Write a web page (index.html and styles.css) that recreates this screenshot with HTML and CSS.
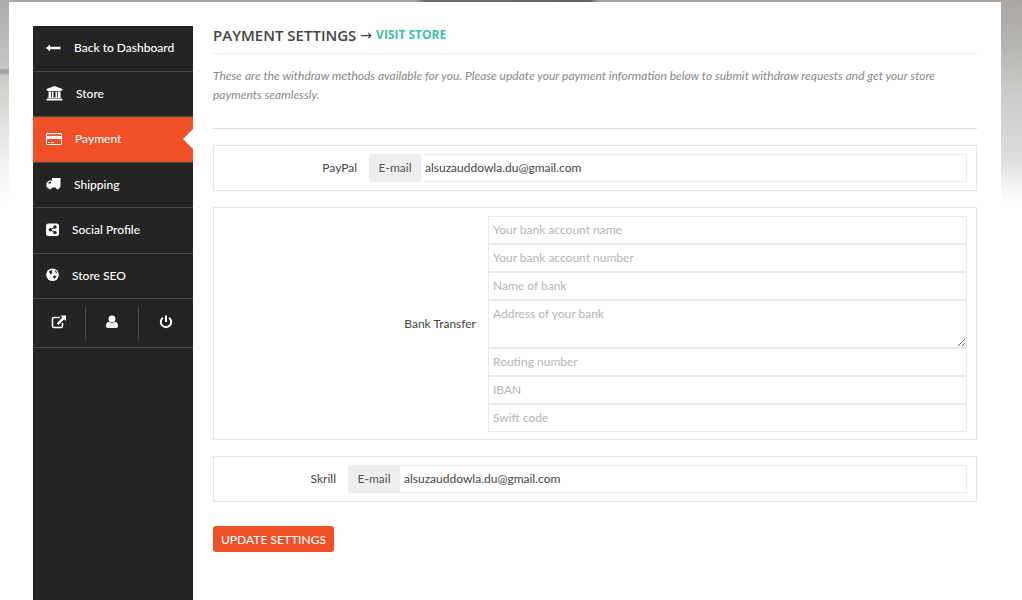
FILE: index.html
```html
<!DOCTYPE html>
<html lang="en">
<head>
    <meta charset="UTF-8">
    <meta name="viewport" content="width=device-width, initial-scale=1.0">
    <title>Payment Settings</title>
    <link rel="stylesheet" href="styles.css">
</head>
<body>
    <div class="container">
        <nav class="sidebar">
            <ul class="menu">
                <li><a href="#">
                    <svg class="icon" width="15" height="14" viewBox="0 0 15 14"><path d="M0 7L4 3.500V5.800H14.500V8.200H4V10.500z"/></svg>
                    Back to Dashboard
                </a></li>
                <li><a href="#">
                    <svg class="icon" width="17" height="15" viewBox="0 0 17 15"><path d="M8.500 0L16.500 3V4.200H15.500V5H1.500V4.200H0.500V3zM2.500 5.500H5V11.500H5.800V5.500H7.500V11.500H9.500V5.500H11.200V11.500H12V5.500H14.500V11.500H15.500V12.500H1.500V11.500H2.500zM0.500 13H16.500V14.500H0.500z"/></svg>
                    Store
                </a></li>
                <li class="active"><a href="#">
                    <svg class="icon" width="16" height="14" viewBox="0 0 16 14"><path fill-rule="evenodd" d="M1.500 1H14.500Q16 1 16 2.500V11.500Q16 13 14.500 13H1.500Q0 13 0 11.500V2.500Q0 1 1.500 1zM1 2.200V4H15V2.200zM1 7V12H15V7zM2 10H4V11H2zM5 10H8V11H5z"/></svg>
                    Payment
                </a></li>
                <li><a href="#">
                    <svg class="icon" width="15" height="14" viewBox="0 0 15 14"><path fill-rule="evenodd" d="M6 1H14.500V10.500H13.400A1.800 1.800 0 0 1 9.800 10.500H5.800A1.800 1.800 0 0 1 2.200 10.500H0.500V6L3 3.500H6zM2 6.500H5V4.500H3.700L2 6.200z"/><circle cx="4" cy="10.800" r="1.500"/><circle cx="11.600" cy="10.800" r="1.500"/></svg>
                    Shipping
                </a></li>
                <li><a href="#">
                    <svg class="icon" width="13" height="14" viewBox="0 0 13 14"><rect y="0.500" width="13" height="12.500" rx="2.500"/><path class="cut-line" d="M9 4L4.500 6.800L9 9.600"/><g class="cut"><circle cx="9" cy="4" r="1.700"/><circle cx="4.300" cy="6.800" r="1.700"/><circle cx="9" cy="9.600" r="1.700"/></g></svg>
                    Social Profile
                </a></li>
                <li><a href="#">
                    <svg class="icon" width="13" height="14" viewBox="0 0 13 14"><circle cx="6.500" cy="6.700" r="6.300"/><path class="cut" d="M3 3.500L5 2L6.500 2.500L5.500 4L6.500 5L5 6.500L3.500 5zM8.500 2L10.500 3.200L11.300 5.500L9.500 4.500zM7 8L9 7.500L10.500 8.500L8.500 11L7.500 10z"/></svg>
                    Store SEO
                </a></li>
            </ul>
            <div class="quick-links">
                <a href="#" aria-label="Visit store">
                    <svg class="icon" width="16" height="14" viewBox="0 0 16 14"><path class="line" d="M9 2.500H3Q1.500 2.500 1.500 4V11Q1.500 12.500 3 12.500H10Q11.500 12.500 11.500 11V8"/><path d="M9.500 0.500H15V6L13.200 4.300L7.500 10L5.800 8.300L11.400 2.500z"/></svg>
                </a>
                <a href="#" aria-label="Edit account">
                    <svg class="icon" width="12" height="14" viewBox="0 0 12 14"><circle cx="6" cy="4" r="3.400"/><path d="M2.700 6.700Q6 9.600 9.300 6.700Q12 7.500 12 11Q12 13 10 13H2Q0 13 0 11Q0 7.500 2.700 6.700z"/></svg>
                </a>
                <a href="#" aria-label="Log out">
                    <svg class="icon" width="14" height="14" viewBox="0 0 14 14"><path class="line thick" d="M4 2.700A5.200 5.200 0 1 0 10 2.700M7 0.500V7"/></svg>
                </a>
            </div>
        </nav>

        <main class="content">
            <header class="page-header">
                <h1>Payment Settings</h1>
                <span class="arrow">→</span>
                <a href="#">Visit Store</a>
            </header>

            <p class="help">These are the withdraw methods available for you. Please update your payment information below to submit withdraw requests and get your store payments seamlessly.</p>

            <form class="payment-form">
                <div class="method paypal">
                    <label class="method-label" for="paypal">PayPal</label>
                    <div class="input-group">
                        <span class="addon">E-mail</span>
                        <input type="email" id="paypal" value="alsuzauddowla.du@gmail.com">
                    </div>
                </div>

                <div class="method bank" role="group" aria-labelledby="bankLabel">
                    <label class="method-label" id="bankLabel" for="bankName">Bank Transfer</label>
                    <div class="bank-fields">
                        <input type="text" id="bankName" placeholder="Your bank account name">
                        <input type="text" aria-label="Account number" placeholder="Your bank account number">
                        <input type="text" aria-label="Bank" placeholder="Name of bank">
                        <textarea aria-label="Bank address" placeholder="Address of your bank"></textarea>
                        <input type="text" aria-label="Routing number" placeholder="Routing number">
                        <input type="text" aria-label="IBAN" placeholder="IBAN">
                        <input type="text" aria-label="Swift code" placeholder="Swift code">
                    </div>
                </div>

                <div class="method skrill">
                    <label class="method-label" for="skrill">Skrill</label>
                    <div class="input-group">
                        <span class="addon">E-mail</span>
                        <input type="email" id="skrill" value="alsuzauddowla.du@gmail.com">
                    </div>
                </div>

                <button type="submit" class="submit-btn">Update Settings</button>
            </form>
        </main>
    </div>
</body>
</html>
```
FILE: styles.css
```css
* {
    box-sizing: border-box;
}
body {
    margin: 0;
    padding: 2px 21px 0 9px;
    font-family: Lato, sans-serif;
    font-size: 12px;
    color: #444;
    background-color: white;
    background-image:
        linear-gradient(to right, transparent 415px, #716b66 425px, #686560 590px, transparent 600px),
        linear-gradient(to right, transparent 9px, #aaa6a5 9px),
        linear-gradient(transparent 68px, #a3a1a2 70px, #a3a1a2 73px, transparent 75px),
        linear-gradient(#ababad, #c2c2c4 60px, #d5d1cc 90px, #e4e2df 125px, #f4f4f4 170px, white 204px),
        linear-gradient(#aaa5a1, #b5b3b0 40px, #cfcdcb 100px, #dededc 160px, #f0f0ef 180px, white 204px);
    background-position: 0 0, 0 0, 0 0, 0 0, 100% 0;
    background-size: 100% 2px, calc(100% - 21px) 2px, 9px 80px, 9px 204px, 21px 204px;
    background-repeat: no-repeat;
}
a {
    color: inherit;
    text-decoration: none;
}
.container {
    display: flex;
    gap: 20px;
    min-height: calc(100vh - 2px);
    padding: 24px 24px 0;
    background-color: white;
}

/* sidebar */
.sidebar {
    flex: 0 0 160px;
    background-color: #242424;
    color: white;
}
.menu {
    display: grid;
    grid-auto-rows: 1fr;
    height: 273px;
    margin: 0;
    padding: 0;
    list-style: none;
}
.menu li {
    position: relative;
    border-bottom: 1px solid #484848;
}
.menu a {
    display: flex;
    align-items: center;
    gap: 13px;
    height: 100%;
    padding: 0 13px 1px;
    font-weight: 500;
}
.menu .active {
    background-color: #f05025;
}
.menu .active::after {
    content: "";
    position: absolute;
    top: 12px;
    right: 0;
    border: 10px solid transparent;
    border-right-color: white;
    border-left: 0;
}
.icon {
    fill: white;
}
.icon .cut {
    fill: #242424;
}
.icon .cut-line {
    fill: none;
    stroke: #242424;
    stroke-width: 1;
}
.icon .line {
    fill: none;
    stroke: white;
    stroke-width: 1.5;
}
.icon .thick {
    stroke-width: 2;
}
.quick-links {
    display: grid;
    grid-template-columns: 52px 53px 1fr;
    height: 49px;
    padding: 7px 0 6px;
    border-bottom: 1px solid #484848;
}
.quick-links a {
    display: flex;
    align-items: center;
    justify-content: center;
    padding-bottom: 4px;
}
.quick-links a + a {
    border-left: 1px solid #484848;
}

/* content */
.content {
    flex: 1;
    min-width: 0;
}
.page-header {
    display: flex;
    align-items: center;
    gap: 4px;
    height: 28px;
    padding-bottom: 10px;
    border-bottom: 1px solid #eee;
    font-family: "Open Sans", sans-serif;
    text-transform: uppercase;
}
.page-header h1 {
    margin: 0;
    font-size: 15px;
    font-weight: 600;
}
.page-header .arrow {
    font-family: "DejaVu Sans", sans-serif;
    font-size: 14px;
}
.page-header a {
    font-size: 12px;
    font-weight: 700;
    color: #3fc1a5;
}
.help {
    margin: 0 0 16px;
    padding: 12px 0 24px;
    border-bottom: 1px solid #ddd;
    font-style: italic;
    line-height: 19px;
    color: #888;
}
.method {
    display: flex;
    align-items: center;
    margin-bottom: 16px;
    padding: 8px 9px;
    border: 1px solid #e5e5e5;
}
.method.bank {
    padding-bottom: 7px;
}
.method-label {
    flex: none;
    padding: 0 12px 2px 0;
    text-align: right;
}
.paypal .method-label {
    width: 146px;
}
.bank .method-label {
    width: 265px;
}
.skrill .method-label {
    width: 125px;
}
.input-group {
    display: flex;
    flex: 1;
}
.addon {
    width: 52px;
    border-radius: 3px 0 0 3px;
    background-color: #eee;
    line-height: 28px;
    text-align: center;
    color: #555;
}
.input-group input {
    flex: 1;
    border-left: 0;
}
.bank-fields {
    display: flex;
    flex: 1;
    flex-direction: column;
}
input,
textarea {
    display: block;
    width: 100%;
    min-width: 0;
    height: 28px;
    margin: 0;
    padding: 3px 4px 5px;
    border: 1px solid #eaeaea;
    border-radius: 0;
    background-color: white;
    font-family: inherit;
    font-size: 12px;
    line-height: 18px;
    color: #444;
}
textarea {
    height: 48px;
    padding-top: 4px;
    resize: both;
}
input::placeholder,
textarea::placeholder {
    color: #b5b5b5;
}
.submit-btn {
    height: 26px;
    margin-top: 8px;
    padding: 0 8px;
    border: 0;
    border-radius: 3px;
    background-color: #f05025;
    font-family: inherit;
    font-size: 12px;
    font-weight: 500;
    text-transform: uppercase;
    color: white;
    cursor: pointer;
}
```
